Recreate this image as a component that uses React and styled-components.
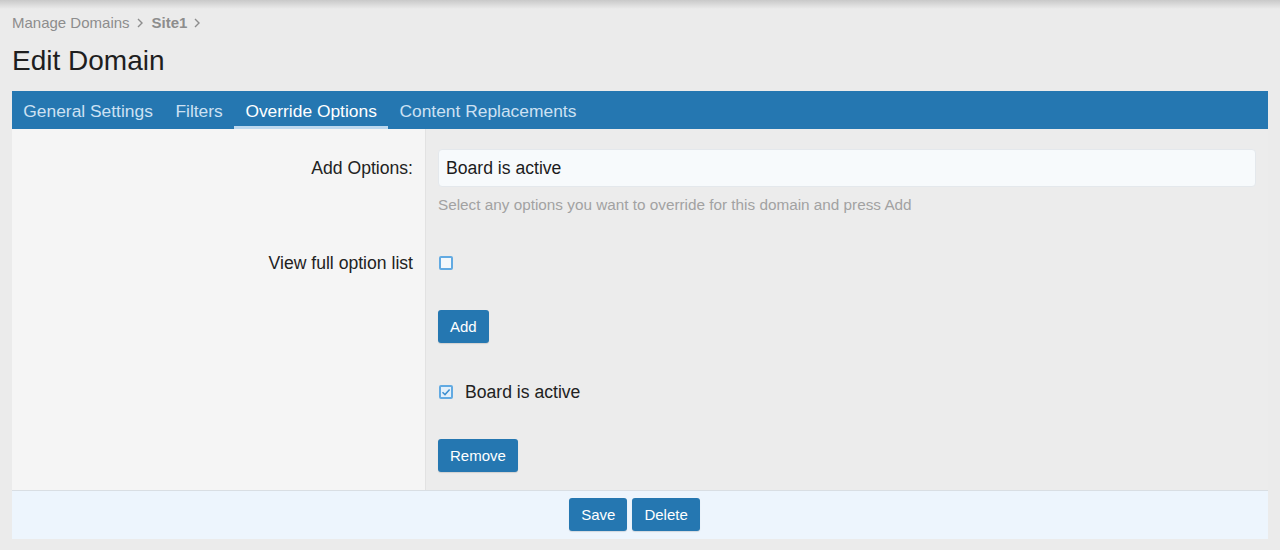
import React from 'react';
import styled, { createGlobalStyle } from 'styled-components';

const GlobalStyle = createGlobalStyle`
    body {
        margin: 0;
        background: #ebebeb;
        font-family: "Liberation Sans", Arial, sans-serif;
    }
`;

const Page = styled.div`
    min-height: 550px;
    padding: 13px 12px 0;
    box-sizing: border-box;
    background: linear-gradient(#c9c9c9 0, #ebebeb 9px) no-repeat, #ebebeb;
`;

const Crumbs = styled.div`
    display: flex;
    align-items: center;
    gap: 6px;
    font-size: 15px;
    line-height: 20px;
    color: #8d8d8d;
`;
const Crumb = styled.span`
    font-weight: ${(p) => (p.$strong ? 700 : 400)};
`;
const Chevron = styled.svg`
    width: 8px;
    height: 10px;
    margin-right: 2px;
`;

const Title = styled.h1`
    margin: 11px 0 13px;
    font-size: 28px;
    line-height: 34px;
    font-weight: 400;
    color: #1e1e1e;
`;

const Tabs = styled.div`
    display: flex;
    height: 38px;
    background: #2577b1;
`;
const Tab = styled.div`
    padding: 2px 11.3px 0;
    display: flex;
    align-items: center;
    font-size: 17.4px;
    color: ${(p) => (p.$active ? '#ffffff' : '#cde1f3')};
    box-shadow: ${(p) => (p.$active ? 'inset 0 -3px 0 #bcd8ef' : 'none')};
`;

const Row = styled.div`
    display: grid;
    grid-template-columns: 413px 1fr;
`;
const Label = styled.div`
    background: #f5f5f5;
    padding: 20px 12px 0 0;
    text-align: right;
    font-size: 17.6px;
    line-height: ${(p) => p.$lh || 20}px;
    color: #222;
`;
const Value = styled.div`
    background: #ececec;
    border-left: 1px solid #e2e2e2;
    padding: ${(p) => p.$top || 19}px 12px ${(p) => (p.$last ? '18px' : '19px')} 12px;
`;

const Input = styled.div`
    height: 38px;
    box-sizing: border-box;
    background: #f7fafc;
    border: 1px solid #e4e8ec;
    border-radius: 4px;
    padding: 0 7px;
    display: flex;
    align-items: center;
    font-size: 17.6px;
    color: #1c1c1c;
`;
const Hint = styled.div`
    margin-top: 9px;
    font-size: 15.3px;
    line-height: 18px;
    color: #a2a2a2;
`;

const CheckLine = styled.label`
    display: flex;
    align-items: center;
    gap: 12px;
    height: 20px;
    font-size: 17.6px;
    color: #222;
`;
const Box = styled.span`
    width: 14px;
    height: 14px;
    box-sizing: border-box;
    margin-left: 1px;
    border: 2px solid #62aae2;
    border-radius: 2px;
    background: ${(p) => (p.$checked ? '#e4f0fa' : '#f4f8fb')};
    display: flex;
    align-items: center;
    justify-content: center;
`;

const Button = styled.button`
    height: 33px;
    padding: 0 12px;
    border: none;
    border-radius: 3px;
    background: #2577b1;
    color: #fff;
    font-family: "Liberation Sans", Arial, sans-serif;
    font-size: 15px;
    box-shadow: 0 1px 1px rgba(0, 0, 0, 0.12);
`;

const Footer = styled.div`
    display: flex;
    justify-content: center;
    gap: 5px;
    padding: 7px 11px 8px 0;
    border-top: 1px solid #d9dee3;
    background: #edf5fd;
`;

const Check = ({ checked }) => (
    <Box $checked={checked}>
        {checked && (
            <svg width="10" height="10" viewBox="0 0 10 10">
                <path d="M1.5 5.2 L4 7.6 L8.6 2.4" fill="none" stroke="#3d8fd0" strokeWidth="1.5" />
            </svg>
        )}
    </Box>
);

const Arrow = () => (
    <Chevron viewBox="0 0 8 10">
        <path d="M2 1 L6 5 L2 9" fill="none" stroke="#8d8d8d" strokeWidth="1.4" />
    </Chevron>
);

const App = () => (
    <Page>
        <GlobalStyle />
        <Crumbs>
            <Crumb>Manage Domains</Crumb>
            <Arrow />
            <Crumb $strong>Site1</Crumb>
            <Arrow />
        </Crumbs>
        <Title>Edit Domain</Title>
        <Tabs>
            <Tab>General Settings</Tab>
            <Tab>Filters</Tab>
            <Tab $active>Override Options</Tab>
            <Tab>Content Replacements</Tab>
        </Tabs>
        <Row>
            <Label $lh={38}>Add Options:</Label>
            <Value $top={20}>
                <Input>Board is active</Input>
                <Hint>Select any options you want to override for this domain and press Add</Hint>
            </Value>
        </Row>
        <Row>
            <Label>View full option list</Label>
            <Value $top={20}>
                <CheckLine>
                    <Check />
                </CheckLine>
            </Value>
        </Row>
        <Row>
            <Label />
            <Value $top={18}>
                <Button>Add</Button>
            </Value>
        </Row>
        <Row>
            <Label />
            <Value $top={20}>
                <CheckLine>
                    <Check checked />
                    Board is active
                </CheckLine>
            </Value>
        </Row>
        <Row>
            <Label />
            <Value $top={18} $last>
                <Button>Remove</Button>
            </Value>
        </Row>
        <Footer>
            <Button>Save</Button>
            <Button>Delete</Button>
        </Footer>
    </Page>
);

export default App;
